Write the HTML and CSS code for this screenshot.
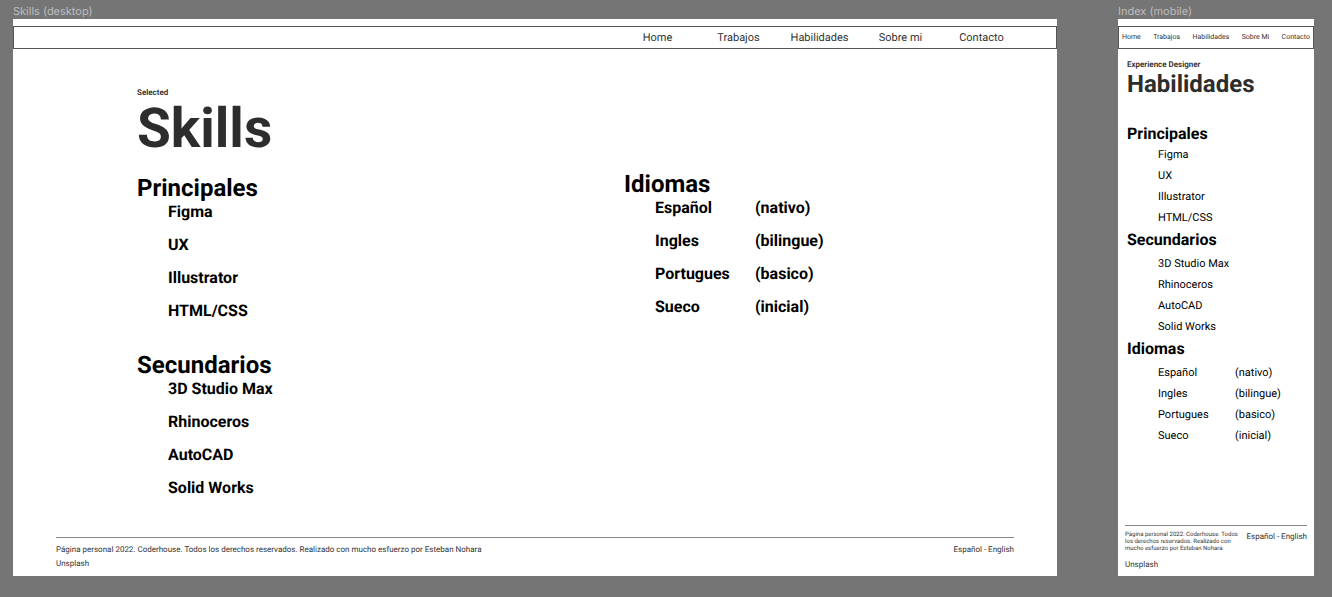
FILE: index.html
```html
<!DOCTYPE html>
<html lang="es">
<head>
<meta charset="utf-8">
<meta name="viewport" content="width=device-width, initial-scale=1">
<title>Skills</title>
<link rel="stylesheet" href="styles.css">
</head>
<body>
<main class="canvas">
  <section class="artboard">
    <div class="artboard-label">Skills (desktop)</div>
    <div class="frame desktop">
      <nav class="nav">
        <a href="#">Home</a>
        <a href="#">Trabajos</a>
        <a href="#">Habilidades</a>
        <a href="#">Sobre mi</a>
        <a href="#">Contacto</a>
      </nav>
      <div class="content">
        <div class="column">
          <p class="eyebrow">Selected</p>
          <h1 class="title">Skills</h1>
          <section class="group">
            <h2 class="heading">Principales</h2>
            <ul class="list">
              <li>Figma</li>
              <li>UX</li>
              <li>Illustrator</li>
              <li>HTML/CSS</li>
            </ul>
          </section>
          <section class="group">
            <h2 class="heading">Secundarios</h2>
            <ul class="list">
              <li>3D Studio Max</li>
              <li>Rhinoceros</li>
              <li>AutoCAD</li>
              <li>Solid Works</li>
            </ul>
          </section>
        </div>
        <div class="column languages-column">
          <section class="group">
            <h2 class="heading">Idiomas</h2>
            <table class="languages">
              <tr><td>Español</td><td>(nativo)</td></tr>
              <tr><td>Ingles</td><td>(bilingue)</td></tr>
              <tr><td>Portugues</td><td>(basico)</td></tr>
              <tr><td>Sueco</td><td>(inicial)</td></tr>
            </table>
          </section>
        </div>
      </div>
      <footer class="footer">
        <div class="footer-row">
          <p class="legal">Página personal 2022. Coderhouse. Todos los derechos reservados. Realizado con mucho esfuerzo por Esteban Nohara</p>
          <p class="locale"><a href="#">Español</a> - <a href="#">English</a></p>
        </div>
        <a class="credit" href="#">Unsplash</a>
      </footer>
    </div>
  </section>

  <section class="artboard">
    <div class="artboard-label">Index (mobile)</div>
    <div class="frame mobile">
      <nav class="nav">
        <a href="#">Home</a>
        <a href="#">Trabajos</a>
        <a href="#">Habilidades</a>
        <a href="#">Sobre Mi</a>
        <a href="#">Contacto</a>
      </nav>
      <div class="content">
        <p class="eyebrow">Experience Designer</p>
        <h1 class="title">Habilidades</h1>
        <section class="group">
          <h2 class="heading">Principales</h2>
          <ul class="list">
            <li>Figma</li>
            <li>UX</li>
            <li>Illustrator</li>
            <li>HTML/CSS</li>
          </ul>
        </section>
        <section class="group">
          <h2 class="heading">Secundarios</h2>
          <ul class="list">
            <li>3D Studio Max</li>
            <li>Rhinoceros</li>
            <li>AutoCAD</li>
            <li>Solid Works</li>
          </ul>
        </section>
        <section class="group">
          <h2 class="heading">Idiomas</h2>
          <table class="languages">
            <tr><td>Español</td><td>(nativo)</td></tr>
            <tr><td>Ingles</td><td>(bilingue)</td></tr>
            <tr><td>Portugues</td><td>(basico)</td></tr>
            <tr><td>Sueco</td><td>(inicial)</td></tr>
          </table>
        </section>
      </div>
      <footer class="footer">
        <div class="footer-row">
          <p class="legal">Página personal 2022. Coderhouse. Todos los derechos reservados. Realizado con mucho esfuerzo por Esteban Nohara</p>
          <p class="locale"><a href="#">Español</a> - <a href="#">English</a></p>
        </div>
        <a class="credit" href="#">Unsplash</a>
      </footer>
    </div>
  </section>
</main>
</body>
</html>
```
FILE: styles.css
```css
* {
  box-sizing: border-box;
}

body,
h1,
h2,
p,
ul {
  margin: 0;
  padding: 0;
}

body {
  background: #757575;
  color: #000;
  font-family: Roboto, "Liberation Sans", sans-serif;
  text-rendering: geometricPrecision;
}

a {
  color: inherit;
  text-decoration: none;
}

ul {
  list-style: none;
}

table {
  border-collapse: collapse;
}

td {
  padding: 0;
}

/* Canvas with two artboards side by side */
.canvas {
  display: grid;
  grid-template-columns: minmax(0, 1fr) 196px;
  column-gap: 61px;
  min-height: 100vh;
  padding: 4px 18px 21px 13px;
}

.artboard {
  display: flex;
  flex-direction: column;
}

.artboard-label {
  color: #bdbdbd;
  font: 11px/15px Inter, sans-serif;
}

.frame {
  display: flex;
  flex: 1;
  flex-direction: column;
  background: #fff;
  padding-top: 7px;
}

.nav {
  border: 1px solid #555;
  color: #333;
}

.eyebrow {
  color: #2d2d2d;
  font-weight: 600;
}

.title {
  color: #2d2d2d;
  font-weight: 700;
}

.heading {
  font-weight: 700;
}

.footer {
  margin-top: auto;
  padding: 5px 0;
  border-top: 1px solid #888;
  color: #333;
  font-size: 8px;
}

.footer-row {
  display: flex;
  justify-content: space-between;
}

.locale {
  white-space: nowrap;
}

.credit {
  display: block;
}

/* Desktop artboard */
.desktop .nav {
  display: grid;
  grid-template-columns: repeat(5, 81px);
  justify-content: end;
  padding-right: 34px;
  font-size: 11px;
  line-height: 21px;
  text-align: center;
}

.desktop .content {
  display: grid;
  grid-template-columns: 487px 1fr;
  padding: 38px 0 36px 124px;
}

.desktop .languages-column {
  padding-top: 83px;
}

.desktop .eyebrow {
  font-size: 8px;
  line-height: 12px;
}

.desktop .title {
  margin-bottom: 15px;
  font-size: 55px;
  line-height: 60px;
}

.desktop .group + .group {
  margin-top: 30px;
}

.desktop .heading {
  font-size: 24px;
  line-height: 28px;
}

.desktop .list {
  display: grid;
  row-gap: 13px;
  margin-left: 31px;
  font-size: 16px;
  font-weight: 700;
  line-height: 20px;
}

.desktop .languages {
  margin-left: 31px;
  font-size: 16px;
  font-weight: 700;
  line-height: 20px;
}

.desktop .languages td {
  padding-bottom: 13px;
}

.desktop .languages td:first-child {
  width: 100px;
}

.desktop .footer {
  margin-right: 43px;
  margin-left: 43px;
  line-height: 14px;
}

/* Mobile artboard */
.mobile .nav {
  display: flex;
  justify-content: space-between;
  padding: 0 3px;
  font-size: 7px;
  line-height: 21px;
}

.mobile .content {
  padding: 11px 9px;
}

.mobile .eyebrow {
  font-size: 8px;
  line-height: 10px;
}

.mobile .title {
  margin-bottom: 26px;
  font-size: 24px;
  line-height: 28px;
}

.mobile .group + .group {
  margin-top: 5px;
}

.mobile .heading {
  margin-bottom: 3px;
  font-size: 16px;
  line-height: 20px;
}

.mobile .group + .group .heading {
  margin-bottom: 6px;
}

.mobile .list {
  display: grid;
  row-gap: 6px;
  margin-left: 31px;
  font-size: 11px;
  line-height: 15px;
}

.mobile .languages {
  margin-left: 31px;
  font-size: 11px;
  line-height: 15px;
}

.mobile .languages td {
  padding-bottom: 6px;
}

.mobile .languages td:first-child {
  width: 77px;
}

.mobile .footer {
  margin-right: 7px;
  margin-left: 7px;
  line-height: 12px;
}

.mobile .legal {
  width: 116px;
  font-size: 6px;
  line-height: 7px;
}

.mobile .credit {
  margin-top: 7px;
}
```
